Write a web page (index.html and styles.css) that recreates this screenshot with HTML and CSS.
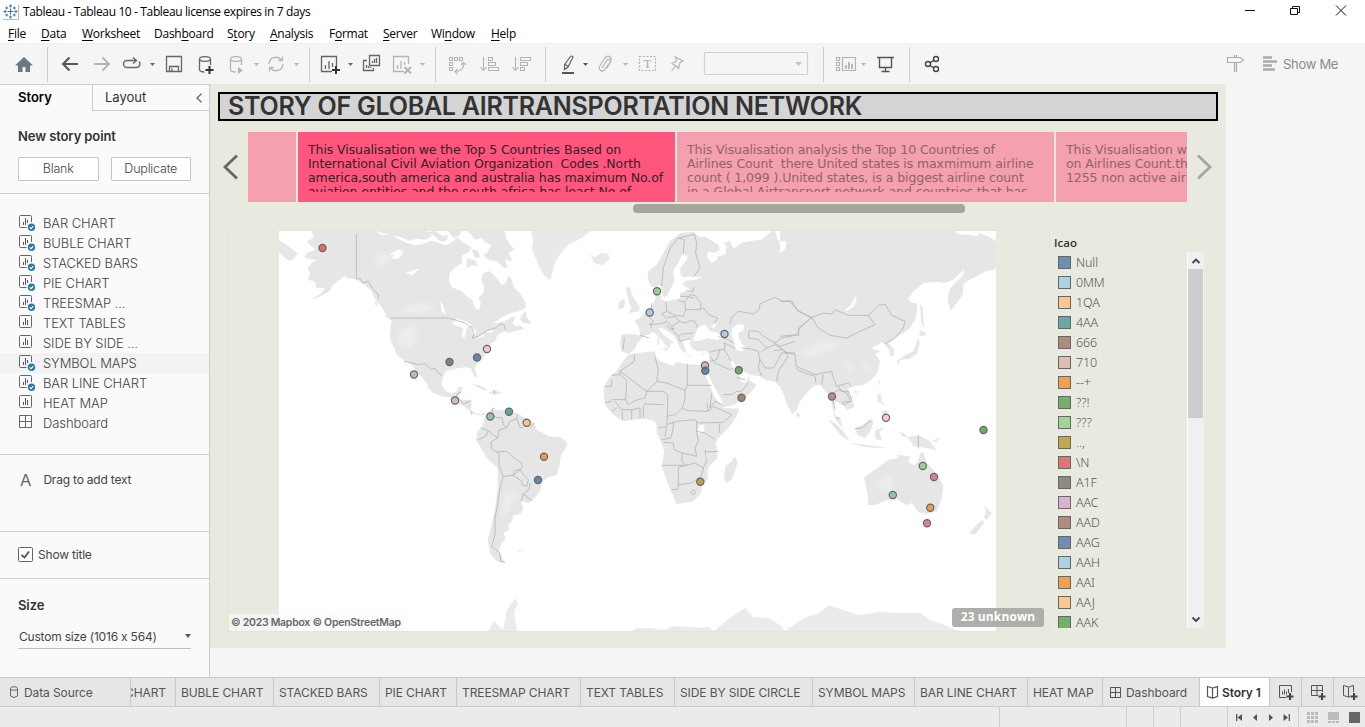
FILE: index.html
```html
<!DOCTYPE html>
<html lang="en">
<head>
<meta charset="utf-8">
<title>Tableau - Tableau 10</title>
<link rel="stylesheet" href="styles.css">
</head>
<body>
<svg class="defs" width="0" height="0">
  <defs>
    <symbol id="sheet" viewBox="0 0 18 18"><rect x="1.500" y="2.500" width="12" height="12" rx="1" fill="none" stroke="#666"/><path d="M5.500 12V9M7.500 12V5M9.500 12V7" stroke="#555" fill="none"/></symbol>
    <symbol id="sheet-used" viewBox="0 0 18 18"><path d="M8.500 14.500H2.500q-1 0-1-1V3.500q0-1 1-1h10q1 0 1 1V9" fill="none" stroke="#666"/><path d="M5.500 12V9M7.500 12V5M9.500 10V7" stroke="#555" fill="none"/><circle cx="13.500" cy="14.300" r="3.700" fill="#2e7b9f"/><path d="M11.700 14.300l1.400 1.400 2.300-2.700" stroke="#fff" fill="none" stroke-width="1.100"/></symbol>
    <symbol id="grid" viewBox="0 0 18 18"><path d="M1.500 2.500h12v12h-12zM7.500 2.500v12M1.500 8.500h12" fill="none" stroke="#666"/></symbol>
  </defs>
</svg>
<div class="app">
  <header class="titlebar">
    <svg class="logo" viewBox="0 0 17 17" width="17" height="17"><path d="M1 16.500H16.500V2" fill="none" stroke="#bbb"/><path d="M8.500 5.500v6M5.500 8.500h6M8.500 1.500v3M7 3h3M8.500 12.500v3M7 14h3M1.500 8.500h3M3 7v3M12.500 8.500h3M14 7v3M4.700 3.500v3M3.200 5h3M12.300 3.500v3M10.800 5h3M4.700 10.500v3M3.200 12h3M12.300 10.500v3M10.800 12h3" stroke="#2d7fae" fill="none"/></svg>
    <span class="window-title">Tableau - Tableau 10 - Tableau license expires in 7 days</span>
    <svg class="window-buttons" width="120" height="23" viewBox="1240 0 120 23" fill="none" stroke="#111"><path d="M1245 10.500h10M1336 5.500l10 10M1346 5.500l-10 10"/><path d="M1290.500 8.500h7v6h-7zM1292.500 8.500v-2h7v6h-2"/></svg>
  </header>
  <nav class="menubar">
    <span><u>F</u>ile</span><span><u>D</u>ata</span><span><u>W</u>orksheet</span><span>Dash<u>b</u>oard</span><span>S<u>t</u>ory</span><span><u>A</u>nalysis</span><span>F<u>o</u>rmat</span><span><u>S</u>erver</span><span>Wi<u>n</u>dow</span><span><u>H</u>elp</span>
  </nav>
  <div class="toolbar">
    <div class="group"><svg width="47" height="35" viewBox="0 47 47 35"><path d="M24 57l-9 8.500h3V72h4.500v-5h3v5H30v-6.500h3z" fill="#6b7785"/></svg></div>
    <div class="group"><svg width="261" height="35" viewBox="48 47 261 35" fill="none" stroke="#666" stroke-width="1.300">
      <path d="M78 64H63M69.500 57.500L63 64l6.500 6.500" stroke-width="2" stroke="#555"/>
      <path d="M94 64h15M102.500 57.500L109 64l-6.500 6.500" stroke-width="2" stroke="#b4b4b4"/>
      <path d="M136 60.500h-9a3.500 3.500 0 0 0 0 7h9.500a3.500 3.500 0 0 0 2.500-6M133 57.500l3.500 3-3.500 3" stroke-width="1.400"/>
      <path d="M150 63h5l-2.500 3z" fill="#666" stroke="none"/>
      <path d="M166.500 56.500h15v15h-15zM169.500 71v-4.500h9V71M172 71v-2.500" />
      <ellipse cx="205" cy="59" rx="5.500" ry="2.300"/><path d="M199.500 59v11q1 2 5 2M210.500 59v6"/><path d="M209.500 66v8M205.500 70h8" stroke="#333" stroke-width="2"/>
      <g stroke="#b4b4b4"><ellipse cx="236" cy="59" rx="5.500" ry="2.300"/><path d="M230.500 59v11q1 2 5 2M241.500 59v6"/><path d="M238 67l5 3.500-5 3.500z" fill="#b4b4b4" stroke="none"/>
      <path d="M269 64a7 7 0 0 1 12.500-4M283 64a7 7 0 0 1-12.500 4M282.500 56.500v4h-4M269.500 71.500v-4h4"/></g>
      <path d="M254 63h5l-2.500 3zM294 63h5l-2.500 3z" fill="#b4b4b4" stroke="none"/>
    </svg></div>
    <div class="group"><svg width="125" height="35" viewBox="310 47 125 35" fill="none" stroke="#666" stroke-width="1.300">
      <path d="M332 71.500h-10.500v-15h15V66M325.500 69v-4M329 69v-8M332.500 67v-4"/><path d="M336 66v8M332 70h8" stroke="#333" stroke-width="2"/><path d="M348 63h5l-2.500 3z" fill="#666" stroke="none"/>
      <path d="M369.500 55.500h10v10h-10zM372.500 63v-2M374.500 63v-4M376.500 63v-5M367 60.500h-3.500v10h10V68M366.500 68v-3M368.500 68v-2M370.500 68v-1"/>
      <g stroke="#b4b4b4"><path d="M404 71.500h-10.500v-15h15V64M397.500 69v-4M401 69v-8M404.500 65v-3"/><path d="M404.500 67l6.500 6.500M411 67l-6.500 6.500" stroke-width="2"/></g><path d="M420 63h5l-2.500 3z" fill="#b4b4b4" stroke="none"/>
    </svg></div>
    <div class="group"><svg width="109" height="35" viewBox="436 47 109 35" fill="none" stroke="#b4b4b4" stroke-width="1.100">
      <path d="M449.500 57.500h3v3h-3zM454.500 57.500h3v3h-3zM459.500 57.500h3v3h-3zM449.500 62.500h3v3h-3zM449.500 67.500h3v3h-3z"/><path d="M463.500 63q1 8-8 8.500M461 65l2.500-2.500 2.500 2.500M457.500 69l-2.500 2.500 2.500 2.500"/>
      <path d="M483.500 57v13M480.500 67l3 3.500 3-3.500M488.500 57.500h4v3h-4zM488.500 62.500h7v3h-7zM488.500 67.500h10v3h-10z"/>
      <path d="M515.500 57v13M512.500 67l3 3.500 3-3.500M520.500 57.500h10v3h-10zM520.500 62.500h7v3h-7zM520.500 67.500h4v3h-4z"/>
    </svg></div>
    <div class="group"><svg width="277" height="35" viewBox="546 47 277 35" fill="none" stroke="#b4b4b4" stroke-width="1.200">
      <path d="M570 57q1.500-2 3 0L568 67l-3.500 2.500V65zM565 64.500l3.500 2" stroke="#666"/><path d="M562 73h12" stroke="#555" stroke-width="2"/><path d="M583 63h5l-2.500 3z" fill="#555" stroke="none"/>
      <path d="M602 68l5-8q1.500-2 3 0 .8 1-.5 3l-5 7q-2.500 2-4.500 0-1.500-2 0-4.500l5-7.500q2.500-3 5-1 2 2 .5 5l-3.500 6"/><path d="M623 63h5l-2.500 3z" fill="#b4b4b4" stroke="none"/>
      <path d="M639.500 56.500h16v14h-16z" stroke-dasharray="2 1.500"/><text x="647.500" y="68" text-anchor="middle" class="tglyph">T</text>
      <path d="M674.500 56.500l8.500 4.500-3 1.500-1.500 6-2.500-2.500-4-2.500 4-2 .5-3.500zM675.500 66l-4 5"/>
      <rect x="704.500" y="52.500" width="103" height="22" rx="1" stroke="#d0d0d0"/><path d="M795 62h7l-3.500 4z" fill="#c4c4c4" stroke="none"/>
    </svg></div>
    <div class="group"><svg width="85" height="35" viewBox="824 47 85 35" fill="none" stroke="#b4b4b4" stroke-width="1.200">
      <path d="M836.500 57.500h3v3h-3zM836.500 62.500h3v3h-3zM836.500 67.500h3v3h-3zM842.500 57.500h13v13h-13z"/><path d="M846 69v-4M849 69v-7M852 69v-5" stroke-width="1.800"/><path d="M861 63h5l-2.500 3z" fill="#b4b4b4" stroke="none"/>
      <path d="M877 57.500h17M879.500 58v9.500h12V58M885.500 67.500V71M881.500 71.500h8" stroke="#555" stroke-width="1.400"/>
    </svg></div>
    <div class="group last"><svg width="50" height="35" viewBox="910 47 50 35" fill="none" stroke="#444" stroke-width="1.400"><circle cx="928" cy="64" r="2.500"/><circle cx="936" cy="59" r="2.500"/><circle cx="936" cy="69" r="2.500"/><path d="M930 63l4-3M930 65.500l4 2.500"/></svg></div>
    <div class="showme">
      <svg width="54" height="22" viewBox="1224 53 54 22" fill="none" stroke="#aaa" stroke-width="1.200"><path d="M1227.500 57.500h13l3 2.500-3 2.500h-13zM1234.500 55v2M1234.500 62.500V72M1236.500 62.500V72M1236.500 55v2"/><path d="M1263 57.500h9M1263 61.500h14M1263 65.500h9M1263 69.500h12" stroke="#aaa" stroke-width="2.500"/></svg>
      <span>Show Me</span>
    </div>
  </div>

  <div class="body">
    <aside class="sidebar">
      <div class="panes"><div class="pane active">Story</div><div class="pane idle"><span>Layout</span><svg width="8" height="10" viewBox="0 0 8 10"><path d="M6.500 .8L2 5l4.500 4.200" fill="none" stroke="#666" stroke-width="1.300"/></svg></div></div>
      <section class="new-point"><h3>New story point</h3><div class="buttons"><button>Blank</button><button>Duplicate</button></div></section>
      <ul class="sheets">
        <li><svg><use href="#sheet-used"/></svg>BAR CHART</li>
        <li><svg><use href="#sheet-used"/></svg>BUBLE CHART</li>
        <li><svg><use href="#sheet-used"/></svg>STACKED BARS</li>
        <li><svg><use href="#sheet-used"/></svg>PIE CHART</li>
        <li><svg><use href="#sheet-used"/></svg>TREESMAP ...</li>
        <li><svg><use href="#sheet"/></svg>TEXT TABLES</li>
        <li><svg><use href="#sheet"/></svg>SIDE BY SIDE ...</li>
        <li class="current"><svg><use href="#sheet-used"/></svg>SYMBOL MAPS</li>
        <li><svg><use href="#sheet-used"/></svg>BAR LINE CHART</li>
        <li><svg><use href="#sheet"/></svg>HEAT MAP</li>
        <li><svg><use href="#grid"/></svg>Dashboard</li>
      </ul>
      <div class="drag-text"><b>A</b><span>Drag to add text</span></div>
      <div class="show-title"><svg width="15" height="15" viewBox="0 0 15 15"><rect x=".5" y=".5" width="14" height="14" rx="1" fill="#fff" stroke="#666"/><path d="M3.500 8l3 2.500 4.500-6" fill="none" stroke="#555" stroke-width="1.800"/></svg><span>Show title</span></div>
      <section class="size"><h3>Size</h3><div class="select"><span>Custom size (1016 x 564)</span><i></i></div></section>
    </aside>

    <main class="workspace">
      <div class="story">
        <h1><span>STORY OF GLOBAL AIRTRANSPORTATION NETWORK</span></h1>
        <div class="navigator">
          <svg class="arrow" width="18" height="26" viewBox="0 0 18 26"><path d="M15 1.500L3 13l12 11.500" fill="none" stroke="#666862" stroke-width="2.800"/></svg>
          <div class="points">
            <div class="point stub"></div>
            <div class="point on"><p>This Visualisation we the Top 5 Countries Based on<br>International Civil Aviation Organization&nbsp; Codes .North<br>america,south america and australia has maximum No.of<br>aviation entities and the south africa has least No of</p></div>
            <div class="point"><p>This Visualisation analysis the Top 10 Countries of<br>Airlines Count&nbsp; there United states is maxmimum airline<br>count ( 1,099 ).United states, is a biggest airline count<br>in a Global Airtransport network and countries that has</p></div>
            <div class="point"><p>This Visualisation we<br>on Airlines Count.there<br>1255 non active airlines</p></div>
          </div>
          <svg class="arrow" width="18" height="26" viewBox="0 0 18 26"><path d="M3 1.500l12 11.500L3 24.500" fill="none" stroke="#a5a69d" stroke-width="2.800"/></svg>
        </div>
        <div class="hscroll"><i></i></div>
        <div class="viz">
          <div class="mapzone">
            <svg class="map" width="717" height="400" viewBox="279 231 717 400">
              <rect x="279" y="231" width="717" height="400" fill="#fff"/>
              <g fill="#e6e6e6">
                <g transform="translate(275 228) scale(.33333)">
                  <path d="M110 9L300 9 320 22 345 18 370 32 395 45 420 52 445 48 470 38 492 45 512 52 535 40 548 28 560 42 575 48 590 60 578 75 562 82 560 105 540 118 524 135 522 160 530 178 560 190 575 205 592 215 600 240 612 247 618 225 610 210 625 195 628 175 618 155 625 135 645 130 665 150 680 172 692 165 698 145 708 150 718 180 735 195 752 225 752 240 730 250 700 258 680 270 668 285 690 280 710 268 722 268 712 285 722 295 735 292 748 302 725 308 700 315 690 310 668 320 660 340 645 348 643 370 632 378 618 398 602 412 600 425 607 445 600 448 592 432 588 420 570 418 550 420 530 425 512 430 503 448 500 470 512 490 530 497 545 490 550 478 565 476 560 490 550 505 558 515 580 515 590 520 587 545 600 556 620 558 632 552 628 562 610 562 590 556 575 540 560 530 545 522 525 508 500 505 475 495 460 480 455 465 440 448 425 430 405 405 390 400 400 425 415 445 430 462 420 455 405 435 395 415 385 395 365 380 358 360 347 340 345 320 347 300 350 275 335 262 325 245 315 230 300 215 290 190 270 172 255 160 235 152 215 150 210 143 190 158 170 175 165 188 150 198 130 208 105 216 140 195 150 180 125 180 118 160 98 155 105 138 98 120 110 105 125 95 105 92 88 88 95 75 122 65 105 50 95 40 115 30Z"/>
                  <path d="M300 9H455L470 25 450 35 425 32 400 38 380 28 350 22ZM455 12L480 9 505 25 520 20 515 38 495 40 480 25ZM520 9H560L555 20 540 30 528 22ZM575 9H690L695 35 718 65 700 75 712 95 705 100 690 92 698 120 685 118 665 100 640 95 625 82 640 70 648 50 630 42 620 30 600 35 590 20ZM590 65L610 68 615 88 600 90ZM575 90L600 98 610 115 590 112 575 120ZM12 35L40 55 68 75 55 95 40 98 20 80 12 72ZM740 262L752 248 755 268 770 288 745 285 735 275Z"/>
                  <path fill="#e9e9e9" d="M768 9H948L920 30 880 50 850 85 838 110 826 155 808 145 795 122 782 90 770 60 775 40ZM945 78L958 88 980 74 1000 78 1005 92 980 112 958 105Z"/>
                  <path d="M585 468L610 470 630 480 640 488 620 484 600 473ZM640 494L658 486 680 494 660 500ZM725 968l15 1-4 4zM300 222l5 0 2 16-8-10zM325 255l25 20-15-5z"/>
                  <path d="M632 560L655 537 662 545 672 545 700 550 725 555 755 572 778 585 785 605 820 625 855 628 878 645 870 665 858 680 853 715 845 740 815 750 800 765 795 790 775 815 762 825 738 820 745 845 735 858 715 862 712 880 700 890 702 905 685 915 692 930 678 950 672 968 680 985 690 1005 665 1000 645 975 638 935 650 890 660 840 668 780 668 720 635 690 615 655 603 635 608 610 622 595 628 575Z"/>
                  <path class="relief" d="M370 250L400 230 460 225 480 245 440 258ZM370 310L410 290 430 330 400 360 370 350ZM300 90L330 70 345 100 310 120ZM690 790L730 795 700 850 678 880Z"/>
                  <path fill="#fff" d="M530 287L548 272 572 280 590 292 575 300 568 332 560 325 565 300 545 294ZM585 296L605 310 596 325ZM600 332L625 318 628 324ZM630 312l25-10-5 12zM340 82L355 72 370 64 385 72 370 92 345 92 360 80ZM390 134L412 128 435 121 412 142ZM495 220L505 232 513 262 500 250ZM655 285l30-20 5 3-20 18z"/>
                </g>
                <g transform="translate(595 228) scale(.33333)">
                  <path d="M78 320L100 317 135 322 132 298 118 278 135 270 150 255 165 242 172 230 182 212 178 192 185 180 195 195 200 215 215 220 240 215 255 210 255 195 275 188 290 190 270 175 262 172 270 158 300 155 325 148 290 145 265 148 255 135 257 118 275 95 278 82 262 80 250 105 235 125 235 145 240 158 225 185 215 205 205 208 200 185 195 170 180 180 165 172 158 150 160 130 185 110 205 75 225 40 255 15 295 12 315 28 330 26 370 50 374 65 360 75 340 70 335 85 350 105 365 95 370 85 390 80 395 55 385 45 405 40 415 62 440 45 470 38 500 35 530 9 670 9 670 470 655 475 640 490 615 520 605 545 592 557 577 530 565 495 565 480 548 470 540 462 510 455 495 445 465 440 445 430 425 420 415 400 405 395 410 415 430 440 440 462 450 465 463 445 465 458 485 470 470 490 445 515 415 530 385 538 380 515 360 480 345 450 335 425 340 400 345 385 335 370 310 370 292 362 283 345 290 338 270 333 262 340 270 360 275 375 265 372 252 355 245 335 235 322 215 308 200 300 190 300 205 320 225 335 240 345 228 345 222 362 215 355 200 335 185 322 175 312 160 320 145 325 128 345 118 365 100 378 78 370 76 345Z"/>
                  <path d="M93 182L105 175 108 195 120 215 135 240 130 250 100 255 110 238 103 225 98 205ZM70 228L82 212 90 220 88 238 72 246ZM187 330l5 0 0 20-6 0zM200 362l20-2-5 10zM275 380l18 2-5 3zM318 378l12-4-6 8z"/>
                  <path d="M100 380L130 375 180 370 185 390 195 400 235 415 245 402 275 408 320 412 335 425 330 440 345 475 360 510 380 530 385 540 433 542 425 565 400 600 375 625 362 645 368 690 345 712 338 725 338 755 322 775 318 795 295 820 245 828 238 812 222 775 200 715 208 670 195 635 185 615 185 595 180 580 150 572 115 575 83 580 55 560 30 530 25 480 45 445 65 430 80 405ZM420 685L428 705 410 755 395 765 387 750 392 715 410 700ZM605 550L615 560 610 570 605 565Z"/>
                  <path fill="#fff" d="M298 325L310 298 325 290 335 295 345 308 330 304 345 310 365 312 385 330 365 337 340 330 310 340 295 338ZM345 297L368 282 358 300ZM412 300L430 288 447 290 445 308 430 315 432 330 440 345 452 360 440 370 422 365 420 345 410 320ZM540 9h15l5 20 15 10 5 25-15 10-3-25-15-15zM312 592l16-2 0 18-18 10-1-8zM330 665l4 10 4 22-6-5z"/>
                </g>
                <g transform="translate(780 228) scale(.33333)">
                  <path d="M0 9H527L530 18 565 20 590 25 598 16 630 28 648 40V115L645 125 620 128 590 145 560 160 550 170 548 200 530 225 512 250 503 215 508 185 525 165 550 140 552 125 535 140 520 155 495 165 470 162 430 165 400 190 385 212 395 225 410 225 412 245 405 275 390 300 370 315 345 330 325 345 343 365 340 385 330 385 328 365 315 350 305 342 295 350 280 355 278 362 300 370 285 378 300 400 295 430 275 455 250 470 220 475 205 480 210 500 220 520 222 538 200 547 190 532 178 525 165 520 160 535 165 560 180 575 188 600 170 580 162 560 155 530 150 500 135 490 120 470 100 475 85 485 60 515 50 540 38 557 22 530 10 495 0 475Z"/>
                  <path d="M420 225L428 240 432 300 424 285ZM420 305L442 317 430 325 418 322ZM412 330L420 345 412 375 390 392 365 395 350 400 375 382 400 370 408 350ZM350 395l12 4-10 12zM295 455l5 5-5 15zM222 490h10l-3 8zM293 497L303 500 305 520 318 535 293 520ZM302 552L322 545 318 565ZM143 573L165 585 190 610 210 640 185 625 160 595ZM205 643L255 650 320 660 290 660 250 656ZM225 600L250 590 270 572 280 585 270 610 255 630 232 620ZM288 605L315 598 298 612 305 635 290 637 284 620ZM355 612l20 5 8 12-12-2zM380 628L415 622 450 640 470 668 440 660 400 655 392 640ZM455 640l25-12-12 15zM500 645l40 25-30-18z"/>
                  <path d="M252 748L275 732 300 715 325 695 355 690 350 680 390 685 385 702 402 712 415 700 420 675 430 672 440 705 455 720 475 745 490 775 485 810 470 850 440 858 415 852 395 825 380 832 350 812 310 820 290 830 262 832 265 810ZM430 875h20l-10 20zM612 832L635 855 620 875 612 868 618 850ZM608 875L612 885 585 920 568 915 590 890Z"/>
                  <path class="relief" d="M60 370L130 340 180 350 150 370 80 390ZM190 415l20-15 15 15-15 15zM245 410l25-5 0 25-20 0zM290 760L330 740 345 780 310 795Z"/>
                  <path fill="#fff" d="M195 246L212 232 227 205 231 210 222 235 200 250ZM0 40l20 0-5 25-15 10z"/>
                </g>
                <path fill="#ebebeb" d="M488 631L494 621 503 630 507 610 515 598 518 604 514 612 517 631ZM632 631L637 628 650 628 665 630 672 626 690 627 700 628 709 627 714 631 721 625 734 615 745 608 753 617 768 618 780 625 785 631 795 624 806 617 819 613 829 605 840 609 859 615 878 612 903 613 920 613 930 620 945 625 958 631Z"/>
              </g>
              <g class="borders">
                <g transform="translate(275 228) scale(.33333)">
                  <path d="M244 18V152L256 152 262 165 280 160 295 185 310 200V213M345 275L350 270H520L545 277 570 285 590 300 597 318 592 330 610 325 635 308 662 300 675 287 688 292 690 306M388 400L430 410 450 407 468 425 480 420 490 435 503 445M540 512L548 497 558 493M555 515L565 528 588 518M590 550V560M658 486V498"/>
                  <path d="M655 540L648 560 665 568 682 570 685 590 695 600 672 605 668 630 650 640 648 660 665 672 672 675M618 600L640 608 632 625 610 635M640 608L668 630M695 600L705 580 725 572 728 560M725 572L735 598 745 600M765 600L778 585M672 675V715L685 745 715 742 742 720 740 705 715 688 695 670 665 672M715 742L718 728 735 725 745 740 760 755 755 775 740 770 742 762 715 742M765 765L762 785 745 798 738 820M745 798L770 818M685 745L675 780 668 830 660 870V920L650 955 675 975 677 1000 690 1003"/>
                </g>
                <g transform="translate(595 228) scale(.33333)">
                  <path d="M118 378V400L75 430 155 490 185 462M180 388L190 425 185 460 215 465 270 487V515L262 540M277 408V472H350M277 472L270 487M75 430V440L50 442M75 440L95 458 92 515 50 515M50 455V475H30M155 490L150 510 120 518 100 530 92 515M155 490H205L218 500V545M145 535L150 528 205 530M145 535V570M135 540V570M110 545V575M82 548V575M60 520L80 545M30 525L50 520M50 550L65 540M80 545L110 545 135 540M218 545L215 590 245 580 300 575 310 585 385 583 410 560 355 535 345 545 335 550 275 548 262 540 240 560 215 565M335 525L340 550M350 495L345 540 360 520 385 532M375 585L372 615M305 580V610L330 615 360 635M305 610L310 640 300 660M205 643L235 645 238 665 262 675 260 700 275 712H200M275 712L250 718V770L247 785H230M250 770L290 765 320 742 325 720 300 705 275 712M300 660L305 685 262 675M330 672L370 670M330 665L335 700 325 720M235 580L235 600 228 630 200 635M190 600L215 595 210 625"/>
                  <circle cx="295" cy="793" r="6"/>
                  <path d="M135 322L163 330M88 328L85 365M165 285L170 300M150 255L175 280 165 290 200 287 215 280M170 225L168 255M213 222L215 250 240 262 265 265 272 245 268 222 250 218M200 258L215 270 240 265M200 258L215 250M215 280L230 295 255 280 270 285 285 278 300 280 308 300M230 295L235 310 250 325 262 318 295 315M250 325L255 340 285 332M215 290L225 305 240 300M240 265L255 280M272 245L315 245 325 240 345 262 368 270 360 285M268 222L285 200 300 202 318 225 315 245M255 205L275 205 295 210M275 188L295 190V178M200 175L205 120 225 60 250 30 268 35 265 75M250 30L275 25 298 18 305 45 302 75 315 120 295 148"/>
                  <path d="M345 372L375 365 388 365 400 385 408 400M345 385L360 405 405 425 415 420M375 365L365 395 345 400M385 345L405 352 420 362M388 365L390 345M370 325L400 335 415 345M385 500L410 500 425 490 440 490 460 465M425 448L450 455M405 290L410 268 430 250 460 255 475 258 492 245 495 228 540 208 560 220 590 218 605 245 650 270M460 330L462 308 490 310 505 325 540 345 560 330 600 322 612 322 610 300 650 270M462 330L490 335 515 360 500 372M440 360L465 362 490 370 495 395 490 420 500 445M515 360L540 350 565 365 535 368M495 395L510 420 535 420 550 395 560 375 600 375M545 460L550 430 570 400 580 385 565 365M540 345L555 355 600 340"/>
                </g>
                <g transform="translate(780 228) scale(.33333)">
                  <path d="M0 220L30 220 55 250 95 268 130 255 155 258 165 245 205 262 265 262 295 232 315 228 335 262 375 280 370 300 345 330 315 347M265 262L285 290 240 310 200 330 150 322 115 300 95 268 60 300 50 320 0 325M10 370L45 380 48 415 105 440 155 430 160 450M50 420L55 428 105 445 108 465M125 470L130 440M160 450L170 475 205 465 215 475M155 500L175 485 200 495 212 520 190 530M175 475L185 490 205 490 215 515M160 520L165 545M185 530L188 522 212 520M415 622V662M225 602L245 600 270 580 278 578M168 568L182 572"/>
                </g>
              </g>
              <g class="pins">
                <circle cx="322.500" cy="248" r="3.600" fill="#e15759"/><circle cx="414" cy="374.500" r="3.600" fill="#bab0ac"/><circle cx="449.500" cy="362" r="3.600" fill="#79706e"/><circle cx="477" cy="357.500" r="3.600" fill="#4e79a7"/><circle cx="487" cy="349" r="3.600" fill="#fabfd2"/><circle cx="455" cy="400.500" r="3.600" fill="#d7b5a6"/><circle cx="490.300" cy="416.500" r="3.600" fill="#86bcb6"/><circle cx="509" cy="411.700" r="3.600" fill="#499894"/><circle cx="526.700" cy="422.700" r="3.600" fill="#ffbe7d"/><circle cx="544" cy="456.700" r="3.600" fill="#f28e2b"/><circle cx="538" cy="480" r="3.600" fill="#4e79a7"/>
                <circle cx="657" cy="291.300" r="3.600" fill="#8cd17d"/><circle cx="649.700" cy="312.500" r="3.600" fill="#a0cbe8"/><circle cx="724.500" cy="334" r="3.600" fill="#a0cbe8"/><circle cx="705" cy="365.500" r="3.600" fill="#d4a6c8"/><circle cx="705.300" cy="370.700" r="3.600" fill="#4e79a7"/><circle cx="738.800" cy="370.200" r="3.600" fill="#59a14f"/><circle cx="741.500" cy="397.800" r="3.600" fill="#9d7660"/><circle cx="700.300" cy="481.700" r="3.600" fill="#b6992d"/>
                <circle cx="832" cy="396.500" r="3.600" fill="#b07aa1"/><circle cx="886" cy="417.700" r="3.600" fill="#fabfd2"/><circle cx="983.500" cy="430" r="3.600" fill="#59a14f"/><circle cx="922.800" cy="466" r="3.600" fill="#8cd17d"/><circle cx="934" cy="477" r="3.600" fill="#d37295"/><circle cx="892.800" cy="495" r="3.600" fill="#86bcb6"/><circle cx="930.300" cy="507.700" r="3.600" fill="#f28e2b"/><circle cx="927" cy="523.300" r="3.600" fill="#d37295"/>
              </g>
            </svg>
            <div class="credit"><span>© 2023 Mapbox © OpenStreetMap</span></div>
            <div class="unknown">23 unknown</div>
          </div>
          <div class="legend">
            <h4>Icao</h4>
            <div class="legend-body">
              <ul>
                <li><i class="c-blue"></i>Null</li><li><i class="c-sky"></i>0MM</li><li><i class="c-peach"></i>1QA</li><li><i class="c-teal"></i>4AA</li><li><i class="c-brown"></i>666</li><li><i class="c-sand"></i>710</li><li><i class="c-orange"></i>--+</li><li><i class="c-green"></i>??!</li><li><i class="c-lime"></i>???</li><li><i class="c-gold"></i>..,</li><li><i class="c-red"></i>\N</li><li><i class="c-gray"></i>A1F</li><li><i class="c-mauve"></i>AAC</li><li><i class="c-brown"></i>AAD</li><li><i class="c-blue"></i>AAG</li><li><i class="c-sky"></i>AAH</li><li><i class="c-orange"></i>AAI</li><li><i class="c-peach"></i>AAJ</li><li><i class="c-green"></i>AAK</li>
              </ul>
              <div class="vscroll"><svg width="16" height="17" viewBox="0 0 16 17"><path d="M4.500 11l3.500-3.500 3.500 3.500" fill="none" stroke="#444" stroke-width="1.800"/></svg><i></i><svg width="16" height="17" viewBox="0 0 16 17"><path d="M4.500 6.500l3.500 3.500 3.500-3.500" fill="none" stroke="#444" stroke-width="1.800"/></svg></div>
            </div>
          </div>
        </div>
      </div>
    </main>
  </div>

  <footer class="tabs">
    <div class="tab source"><svg width="10" height="13" viewBox="0 0 10 13" fill="none" stroke="#666"><ellipse cx="5" cy="2.500" rx="3.500" ry="1.800"/><path d="M1.500 2.500v7.500q3.500 3 7 0V2.500"/></svg><span>Data Source</span></div>
    <div class="tab cut"><span>BAR CHART</span></div>
    <div class="tab"><span>BUBLE CHART</span></div><div class="tab"><span>STACKED BARS</span></div><div class="tab"><span>PIE CHART</span></div><div class="tab"><span>TREESMAP CHART</span></div><div class="tab"><span>TEXT TABLES</span></div><div class="tab"><span>SIDE BY SIDE CIRCLE</span></div><div class="tab"><span>SYMBOL MAPS</span></div><div class="tab"><span>BAR LINE CHART</span></div><div class="tab"><span>HEAT MAP</span></div>
    <div class="tab dashboard"><svg width="12" height="13" viewBox="0 0 12 13"><path d="M.5 1.500h10v10H.5zM5.500 1.500v10M.5 6.500h10" fill="none" stroke="#555"/></svg><span>Dashboard</span></div>
    <div class="tab selected"><svg width="13" height="14" viewBox="0 0 13 14"><path d="M6.500 3L1.500 1.500v10l5 1.500 5-1.500v-10zM6.500 3v10" fill="none" stroke="#555" stroke-width="1.200"/></svg><span>Story 1</span></div>
    <div class="tab add"><svg width="18" height="17" viewBox="0 0 18 17" fill="none" stroke="#555"><path d="M9 13.500H2.500v-12h12V8M5.500 10.500v-3M7.500 10.500v-5M9.500 10.500v-3M11.500 9v-4"/><path d="M13 9v7M9.500 12.500h7" stroke="#444" stroke-width="2"/></svg></div>
    <div class="tab add"><svg width="18" height="17" viewBox="0 0 18 17" fill="none" stroke="#555"><path d="M9 11.500H2.500v-10h11V8M8 1.500v10M2.500 6.500h11"/><path d="M13 9v7M9.500 12.500h7" stroke="#444" stroke-width="2"/></svg></div>
    <div class="tab add"><svg width="18" height="17" viewBox="0 0 18 17" fill="none" stroke="#555"><path d="M9 12.500L7.500 13l-5-1.500v-10l5 1.500 5-1.500V8M7.500 3v10"/><path d="M13 9v7M9.500 12.500h7" stroke="#444" stroke-width="2"/></svg></div>
  </footer>
  <div class="status">
    <div></div><div></div><div></div><div></div><div></div>
    <div><svg width="70" height="20" viewBox="1228 707 70 20" fill="#555"><path d="M1236 714h1.300v7H1236zM1242 714v7l-4.500-3.500zM1257 714v7l-4-3.500zM1269 714v7l4-3.500zM1283.500 714v7l4.500-3.500zM1288.700 714h1.300v7h-1.300z"/></svg></div>
    <div><svg width="66" height="20" viewBox="1299 707 66 20" fill="#bbb"><path d="M1307 712h3v3h-3zM1311 712h3v3h-3zM1315 712h3v3h-3zM1307 716h3v3h-3zM1311 716h3v3h-3zM1315 716h3v3h-3zM1307 720h3v3h-3zM1311 720h3v3h-3zM1315 720h3v3h-3zM1328 712h11v8h-11zM1328 721h3v2h-3zM1332 721h3v2h-3zM1336 721h3v2h-3z"/><path d="M1349 712h11v11h-11z" fill="#666"/></svg></div>
  </div>
</div>
</body>
</html>
```
FILE: styles.css
```css
* { box-sizing: border-box; }
body { margin: 0; width: 1365px; height: 727px; overflow: hidden; background: #f4f4f4; color: #444; font-family: Inter, "Liberation Sans", sans-serif; font-size: 13px; font-feature-settings: "calt" 0; }
h1, h3, h4, p, ul { margin: 0; padding: 0; }
ul { list-style: none; }
svg { display: block; flex: none; }
.defs { position: absolute; }
.app { display: flex; flex-direction: column; height: 727px; white-space: nowrap; }

/* Window chrome */
.titlebar { height: 23px; flex: none; background: #fff; display: flex; align-items: center; color: #000; font: 12px "Open Sans", sans-serif; }
.logo { margin: 0 4px 0 2px; }
.window-title { letter-spacing: -.37px; flex: 1; }
.window-buttons { margin-right: 5px; }
.menubar { height: 20px; flex: none; background: #fff; color: #000; display: grid; grid-template-columns: 33px 41px 72px 73px 43px 59px 54px 48px 60px 60px; padding-left: 8px; line-height: 21px; font-family: "Open Sans", sans-serif; font-size: 12px; letter-spacing: -.25px; }
.menubar u { text-underline-offset: 2px; }
.toolbar { height: 41px; flex: none; border-top: 1px solid #eee; background: #f5f5f5; display: flex; align-items: flex-start; padding-top: 3px; }
.group { border-right: 1px solid #ccc; }
.group.last { border: 0; }
.tglyph { font: 13px "Liberation Serif", serif; fill: #aaa; stroke: none; }
.showme { margin-left: auto; display: flex; align-items: center; height: 34px; gap: 5px; padding-right: 28px; color: #8a8a8a; font-size: 13px; }
.showme span { width: 54px; letter-spacing: -.3px; }

/* Side panel */
.body { flex: 1; min-height: 0; display: flex; }
.sidebar { width: 210px; flex: none; background: #fafafa; border-right: 1px solid #ccc; border-top: 1px solid #ccc; display: flex; flex-direction: column; }
.panes { display: flex; height: 26px; flex: none; line-height: 25px; font-size: 13px; }
.pane.active { width: 92px; padding-left: 18px; font-weight: 600; color: #000; }
.pane.idle { flex: 1; border-left: 1px solid #ccc; border-bottom: 1px solid #ccc; padding: 0 6px 0 12px; display: flex; justify-content: space-between; align-items: center; color: #333; }
h3 { font-size: 13px; font-weight: 600; color: #333; line-height: 16px; letter-spacing: -.1px; }
.new-point { height: 83px; flex: none; padding: 17px 18px 0; border-bottom: 1px solid #ccc; }
.buttons { display: flex; gap: 12px; margin-top: 13px; }
button { width: 81px; height: 24px; padding: 0 0 2px; background: #fff; border: 1px solid #c6c6c6; border-radius: 1px; font: 300 12.500px Inter, sans-serif; letter-spacing: -.2px; color: #444; }
.sheets { height: 261px; flex: none; padding-top: 19px; border-bottom: 1px solid #ccc; }
.sheets li { height: 20px; display: flex; gap: 7px; padding-left: 18px; line-height: 20px; font-size: 13px; font-weight: 300; letter-spacing: -.1px; }
.sheets li svg { width: 18px; height: 18px; }
.sheets .current { background: #f3f3f3; }
.drag-text { height: 77px; flex: none; border-bottom: 1px solid #ccc; padding: 15px 20px; display: flex; gap: 12px; line-height: 20px; font-size: 12px; letter-spacing: -.2px; }
.drag-text b { font: 16.500px/20px Inter, sans-serif; color: #666; letter-spacing: 0; }
.show-title { height: 47px; flex: none; border-bottom: 1px solid #ccc; padding: 0 0 1px 18px; display: flex; align-items: center; gap: 5px; font-size: 12px; letter-spacing: -.2px; }
.size { padding: 18px 18px 0; }
.select { display: flex; justify-content: space-between; align-items: center; height: 25px; margin-top: 11px; padding-left: 1px; border-bottom: 1px solid #c0c0c0; font-size: 12px; letter-spacing: -.2px; }
.select i { border: 3.500px solid transparent; border-top: 4px solid #555; border-bottom: 0; }

/* Story canvas */
.workspace { flex: 1; background: #f5f5f5; }
.story { width: 1016px; height: 564px; background: #e9eadf; padding: 8px 8px 0; }
h1 { height: 29px; border: 2px solid #000; background: #d4d4d4; color: #333; padding-left: 8px; font: 600 25px/25px Inter, sans-serif; letter-spacing: -.24px; }
.navigator { display: flex; margin-top: 11px; height: 70px; align-items: center; }
.arrow { margin: 0 8px 0 4px; }
.navigator .arrow:last-child { margin: 0 0 0 8px; }
.points { width: 939px; height: 70px; flex: none; display: flex; gap: 2px; overflow: hidden; }
.point { width: 377px; flex: none; padding: 10px; background: #f4a0ae; color: #8f636b; }
.point.stub { width: 48px; }
.point.on { background: #ff567d; color: #30212a; }
.point p { height: 50px; overflow: hidden; padding-top: 1px; font: 12.500px/14px "DejaVu Sans", sans-serif; letter-spacing: -.09px; }
.hscroll { height: 9px; margin: 2px 0 0 415px; }
.hscroll i { display: block; width: 332px; height: 9px; border-radius: 4px; background: #a4a59b; }
.viz { display: flex; margin: 17px 0 0 10px; height: 402px; }
.mapzone { position: relative; width: 822px; flex: none; padding-left: 50px; border: 1px solid #e3e4dc; }
.relief { fill: #ededed; filter: blur(6px); }
.borders { fill: none; stroke: #b0b0b0; }
.borders g { stroke-width: 2.300; }
.pins circle { fill-opacity: .88; stroke: #666; stroke-width: 1.200; }
.credit { position: absolute; left: 0; bottom: 0; height: 17px; width: 176px; padding-left: 2px; background: rgba(250,250,250,.65); font: 600 10.500px/17px Inter, sans-serif; letter-spacing: -.27px; color: #666; }
.unknown { position: absolute; right: 5px; bottom: 4px; width: 92px; height: 19px; border-radius: 3px; background: #aeaeab; color: #fff; text-align: center; font: bold 12px/18px "Open Sans", sans-serif; letter-spacing: .1px; }

/* Legend */
.legend { flex: 1; padding-left: 4px; }
h4 { height: 22px; font: 600 11.500px/26px "Open Sans", sans-serif; color: #333; }
.legend-body { display: flex; height: 376px; justify-content: space-between; padding-right: 14px; overflow: hidden; }
.legend li { display: flex; align-items: center; gap: 5px; height: 20px; padding-left: 4px; font: 300 12.500px "Noto Sans", sans-serif; letter-spacing: -.1px; color: #555; }
.legend li i { width: 13px; height: 13px; border: 1px solid #666; }
.c-blue { background: #6d8fb4; } .c-sky { background: #aed1e6; } .c-peach { background: #fcc78f; } .c-teal { background: #69a8a2; } .c-brown { background: #ac8d79; } .c-sand { background: #dcbfb1; } .c-orange { background: #f3a04e; } .c-green { background: #75af6c; } .c-lime { background: #9fd790; } .c-gold { background: #c0a84e; } .c-red { background: #e47374; } .c-gray { background: #908885; } .c-mauve { background: #d9b3cd; }
.vscroll { width: 17px; height: 376px; flex: none; background: #f0f0f0; border-left: 1px solid #fff; display: flex; flex-direction: column; }
.vscroll i { height: 149px; margin-bottom: auto; background: #cdcdcd; width: 15px; }

/* Sheet tabs */
.tabs { height: 30px; flex: none; background: #e6e6e6; border-top: 1px solid #c8c8c8; border-bottom: 1px solid #ccc; display: grid; grid-template-columns: 131px 45px 98px 106px 77px 124px 94px 138px 102px 113px 75px 97px 70px 32px 32px 31px; }
.tab { border-right: 1px solid #c8c8c8; padding-left: 5px; display: flex; align-items: center; overflow: hidden; font-size: 12px; color: #555; letter-spacing: -.1px; }
.source { padding-left: 9px; gap: 5px; }
.cut { justify-content: flex-end; padding-right: 9px; }
.dashboard { padding-left: 7px; gap: 4px; }
.selected { background: #fff; gap: 3px; padding-left: 6px; font-weight: 600; color: #333; }
.add { padding-left: 7px; }
.tab:last-child { border-right: 0; }
.status { height: 20px; flex: none; background: #ebebeb; display: grid; grid-template-columns: 1000px 127px 27px 27px 47px 71px 66px; }
.status div { border-right: 1px solid #ccc; }
.status div:last-child { border: 0; }
```
